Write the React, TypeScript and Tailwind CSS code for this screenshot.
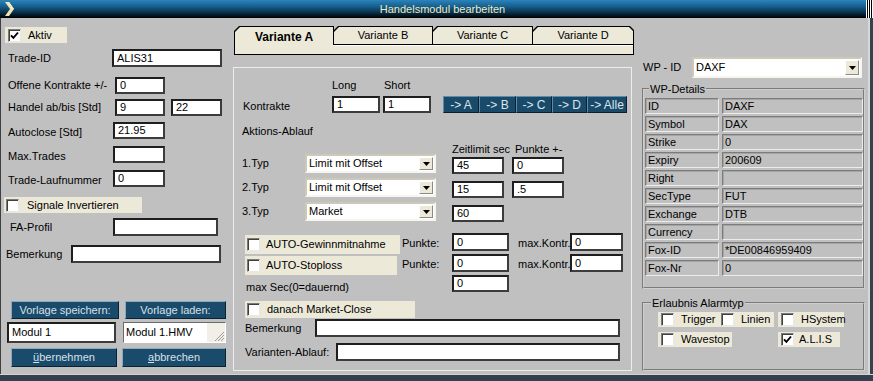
import React from "react";

function Check({ checked = false }: { checked?: boolean }) {
  return (
    <div className="w-[13px] h-[13px] shrink-0 bg-white border border-t-[#7a7a7a] border-l-[#7a7a7a] border-b-[#e8e8e8] border-r-[#e8e8e8] shadow-[inset_1px_1px_0_#404040] flex items-center justify-center">
      {checked && (
        <svg width="9" height="9" viewBox="0 0 9 9">
          <path d="M1 4.3 L3.4 6.9 L8 1.5" stroke="#000" strokeWidth="1.9" fill="none" />
        </svg>
      )}
    </div>
  );
}

function CreamCheck({
  label,
  checked = false,
  cls,
  gap = "ml-[7px]",
}: {
  label: string;
  checked?: boolean;
  cls: string;
  gap?: string;
}) {
  return (
    <div className={`bg-[#ece9d8] flex items-center shrink-0 ${cls}`}>
      <Check checked={checked} />
      <span className={`${gap} whitespace-nowrap`}>{label}</span>
    </div>
  );
}

function TextBox({ cls, value = "" }: { cls: string; value?: string }) {
  return (
    <div
      className={`bg-white border-2 border-t-[#1e1e1e] border-l-[#1e1e1e] border-b-[#3c3c3c] border-r-[#3c3c3c] flex items-center pl-[3px] shrink-0 whitespace-nowrap ${cls}`}
    >
      {value}
    </div>
  );
}

function Select({ cls, value }: { cls: string; value: string }) {
  return (
    <div
      className={`bg-white border-2 border-t-[#cdc9b9] border-l-[#cdc9b9] border-b-[#f7f5ee] border-r-[#f7f5ee] flex items-stretch shrink-0 ${cls}`}
    >
      <div className="flex-1 flex items-center pl-[2px] whitespace-nowrap">{value}</div>
      <div className="w-[14px] my-[1px] mr-[1px] bg-[#ece9d8] border border-t-white border-l-white border-b-[#8a8a8a] border-r-[#8a8a8a] flex items-center justify-center">
        <svg width="7" height="4" viewBox="0 0 7 4">
          <path d="M0 0H7L3.5 4Z" fill="#000" />
        </svg>
      </div>
    </div>
  );
}

function BlueBtn({ cls, children }: { cls: string; children: React.ReactNode }) {
  return (
    <div
      className={`bg-[#1b4b6a] text-[#d6e1ea] border border-t-[#8aa9bf] border-l-[#8aa9bf] border-b-[#0b2232] border-r-[#0b2232] flex items-center justify-center shrink-0 whitespace-nowrap ${cls}`}
    >
      {children}
    </div>
  );
}

function TitleBar() {
  return (
    <div className="h-[18px] flex items-stretch bg-[linear-gradient(180deg,#2a84bd_0%,#17608f_35%,#082f49_70%,#000_100%)]">
      <div className="w-[16px] ml-[3px] flex items-center">
        <svg width="12" height="16" viewBox="0 0 12 16">
          <path d="M2 1 H6 L11 8 L6 15 H2 L7 8 Z" fill="#efe5b0" />
          <path d="M6 1 L11 8 L10 8 L5.5 1.6 Z" fill="#fffbe0" />
        </svg>
      </div>
      <div className="flex-1 flex items-center justify-center text-[#ecebc0] text-[11px]">
        Handelsmodul bearbeiten
      </div>
      <div className="w-[7px] bg-[repeating-linear-gradient(90deg,#ffffff_0px,#ffffff_1px,#000000_1px,#000000_2px)]" />
    </div>
  );
}

function LeftCol() {
  return (
    <div className="w-[230px] flex flex-col">
      <CreamCheck label="Aktiv" checked cls="mt-[9px] ml-[4px] w-[62px] h-[16px] pl-[3px]" />

      <div className="mt-[6px] h-[18px] flex items-center">
        <span className="w-[111px] pl-[7px]">Trade-ID</span>
        <TextBox cls="w-[110px] h-[18px]" value="ALIS31" />
      </div>

      <div className="mt-[10px] h-[17px] flex items-center">
        <span className="w-[114px] pl-[7px] whitespace-nowrap">Offene Kontrakte +/-</span>
        <TextBox cls="w-[50px] h-[17px]" value="0" />
      </div>

      <div className="mt-[5px] h-[17px] flex items-center">
        <span className="w-[114px] pl-[7px] whitespace-nowrap">Handel ab/bis [Std]</span>
        <TextBox cls="w-[50px] h-[17px]" value="9" />
        <TextBox cls="ml-[6px] w-[51px] h-[17px]" value="22" />
      </div>

      <div className="mt-[6px] h-[17px] flex items-center">
        <span className="w-[112px] pl-[7px] mt-[4px]">Autoclose [Std]</span>
        <TextBox cls="w-[52px] h-[17px]" value="21.95" />
      </div>

      <div className="mt-[7px] h-[17px] flex items-center">
        <span className="w-[112px] pl-[7px] mt-[3px]">Max.Trades</span>
        <TextBox cls="w-[52px] h-[17px]" />
      </div>

      <div className="mt-[7px] h-[17px] flex items-center">
        <span className="w-[112px] pl-[7px] mt-[3px]">Trade-Laufnummer</span>
        <TextBox cls="w-[52px] h-[17px]" value="0" />
      </div>

      <CreamCheck
        label="Signale Invertieren"
        cls="mt-[10px] ml-[3px] w-[138px] h-[16px] pl-[2px]"
        gap="ml-[8px]"
      />

      <div className="mt-[5px] h-[18px] flex items-center">
        <span className="w-[112px] pl-[9px]">FA-Profil</span>
        <TextBox cls="w-[105px] h-[18px]" />
      </div>

      <div className="mt-[9px] h-[18px] flex items-center">
        <span className="w-[70px] pl-[5px]">Bemerkung</span>
        <TextBox cls="w-[150px] h-[18px]" />
      </div>

      <div className="mt-[38px] h-[18px] flex">
        <BlueBtn cls="ml-[10px] w-[108px] h-[18px]">Vorlage speichern:</BlueBtn>
        <BlueBtn cls="ml-[6px] w-[101px] h-[18px]">Vorlage laden:</BlueBtn>
      </div>

      <div className="mt-[3px] h-[21px] flex">
        <TextBox cls="ml-[6px] w-[109px] h-[21px]" value="Modul 1" />
        <div className="ml-[7px] w-[103px] h-[21px] bg-white border border-t-[#6a6a6a] border-l-[#6a6a6a] border-b-white border-r-white flex items-stretch">
          <div className="flex-1 flex items-center pl-[2px] whitespace-nowrap">Modul 1.HMV</div>
          <div className="w-[18px] bg-[#f1efe6] flex items-end justify-end">
            <svg width="12" height="12" viewBox="0 0 12 12">
              <path d="M11 2 L2 11 M11 5 L5 11 M11 8 L8 11" stroke="#9c9a92" strokeWidth="1" />
            </svg>
          </div>
        </div>
      </div>

      <div className="mt-[5px] h-[19px] flex">
        <BlueBtn cls="ml-[10px] w-[106px] h-[19px]">
          <span>
            <span className="underline">ü</span>bernehmen
          </span>
        </BlueBtn>
        <BlueBtn cls="ml-[5px] w-[104px] h-[19px]">
          <span>
            <span className="underline">a</span>bbrechen
          </span>
        </BlueBtn>
      </div>
    </div>
  );
}

function Tab({
  label,
  active = false,
  cls,
  clip,
}: {
  label: string;
  active?: boolean;
  cls: string;
  clip: string;
}) {
  return (
    <div className={`relative h-[19px] shrink-0 ${cls}`}>
      <div
        className={`absolute inset-0 bg-black ${clip}`}
      />
      <div
        className={`absolute left-[1px] right-[1px] top-[1px] bg-[#ece9d8] ${active ? "bottom-0" : "bottom-[1px]"} ${clip}`}
      />
      <div
        className={`relative h-full flex items-center justify-center ${active ? "font-bold text-[12px] pt-[3px]" : ""}`}
      >
        {label}
      </div>
    </div>
  );
}

function Tabs() {
  return (
    <div className="mt-[8px] ml-[3px] w-[400px] flex flex-col">
      <div className="flex">
        <Tab
          label="Variante A"
          active
          cls="w-[100px]"
          clip="[clip-path:polygon(5px_0,100%_0,100%_100%,0_100%,0_5px)]"
        />
        <Tab
          label="Variante B"
          cls="w-[100px] -ml-px"
          clip="[clip-path:polygon(5px_0,100%_0,100%_100%,0_100%,0_5px)]"
        />
        <Tab
          label="Variante C"
          cls="w-[101px] -ml-px"
          clip="[clip-path:polygon(5px_0,100%_0,100%_100%,0_100%,0_5px)]"
        />
        <Tab
          label="Variante D"
          cls="w-[102px] -ml-px"
          clip="[clip-path:polygon(5px_0,calc(100%-4px)_0,100%_4px,100%_100%,0_100%,0_5px)]"
        />
      </div>
      <div className="h-[10px] bg-[#ece9d8] border-l border-r border-b border-black">
        <div className="ml-[98px] h-px bg-white" />
      </div>
    </div>
  );
}

function ArrowBtns() {
  const items = [
    { t: "-> A", w: "w-[36px]" },
    { t: "-> B", w: "w-[37px]" },
    { t: "-> C", w: "w-[36px]" },
    { t: "-> D", w: "w-[35px]" },
    { t: "-> Alle", w: "w-[40px]" },
  ];
  return (
    <div className="ml-[12px] flex h-[17px]">
      {items.map((it) => (
        <div
          key={it.t}
          className={`${it.w} h-[17px] bg-[#1a4a69] text-[#dbe5ed] text-[12px] border border-t-[#5f8aa8] border-l-[#5f8aa8] border-b-[#0a2030] border-r-[#0a2030] flex items-center justify-center whitespace-nowrap`}
        >
          {it.t}
        </div>
      ))}
    </div>
  );
}

function Panel() {
  return (
    <div className="mt-[12px] ml-[2px] w-[399px] h-[304px] border border-[#ededed] flex flex-col">
      <div className="mt-[11px] h-[12px] flex items-center">
        <span className="ml-[98px] w-[52px]">Long</span>
        <span>Short</span>
      </div>

      <div className="mt-[5px] h-[17px] flex items-center">
        <span className="ml-[9px] w-[89px] mt-[4px]">Kontrakte</span>
        <TextBox cls="w-[48px] h-[17px]" value="1" />
        <TextBox cls="ml-[3px] w-[48px] h-[17px]" value="1" />
        <ArrowBtns />
      </div>

      <div className="mt-[12px] h-[12px] flex items-center">
        <span className="ml-[8px]">Aktions-Ablauf</span>
      </div>

      <div className="mt-[7px] h-[10px] flex items-start">
        <span className="ml-[218px] w-[63px] whitespace-nowrap">Zeitlimit sec</span>
        <span className="whitespace-nowrap">Punkte +-</span>
      </div>

      <div className="h-[19px] flex items-start">
        <span className="ml-[8px] w-[63px] self-center">1.Typ</span>
        <Select cls="w-[131px] h-[19px]" value="Limit mit Offset" />
        <TextBox cls="ml-[16px] mt-[3px] w-[52px] h-[17px]" value="45" />
        <TextBox cls="ml-[8px] mt-[3px] w-[52px] h-[17px]" value="0" />
      </div>

      <div className="mt-[5px] h-[19px] flex items-start">
        <span className="ml-[8px] w-[63px] self-center">2.Typ</span>
        <Select cls="w-[131px] h-[19px]" value="Limit mit Offset" />
        <TextBox cls="ml-[16px] mt-[3px] w-[52px] h-[17px]" value="15" />
        <TextBox cls="ml-[8px] mt-[3px] w-[52px] h-[17px]" value=".5" />
      </div>

      <div className="mt-[5px] h-[19px] flex items-start">
        <span className="ml-[8px] w-[63px] self-center">3.Typ</span>
        <Select cls="w-[131px] h-[19px]" value="Market" />
        <TextBox cls="ml-[16px] mt-[3px] w-[52px] h-[17px]" value="60" />
      </div>

      <div className="mt-[12px] h-[21px] flex items-start">
        <CreamCheck
          label="AUTO-Gewinnmitnahme"
          cls="ml-[11px] mt-[2px] w-[155px] h-[19px] pl-[2px]"
          gap="ml-[6px]"
        />
        <span className="ml-[2px] w-[50px] mt-[5px]">Punkte:</span>
        <TextBox cls="w-[57px] h-[18px]" value="0" />
        <span className="ml-[9px] w-[52px] mt-[5px] whitespace-nowrap">max.Kontr.</span>
        <TextBox cls="w-[53px] h-[18px]" value="0" />
      </div>

      <div className="h-[21px] flex items-start">
        <CreamCheck
          label="AUTO-Stoploss"
          cls="ml-[11px] mt-[2px] w-[152px] h-[19px] pl-[2px]"
          gap="ml-[6px]"
        />
        <span className="ml-[5px] w-[50px] mt-[5px]">Punkte:</span>
        <TextBox cls="w-[57px] h-[18px]" value="0" />
        <span className="ml-[9px] w-[52px] mt-[5px] whitespace-nowrap">max.Kontr.</span>
        <TextBox cls="w-[53px] h-[18px]" value="0" />
      </div>

      <div className="h-[17px] flex items-start">
        <span className="ml-[12px] w-[206px] mt-[7px] whitespace-nowrap">max Sec(0=dauernd)</span>
        <TextBox cls="w-[57px] h-[17px]" value="0" />
      </div>

      <CreamCheck
        label="danach Market-Close"
        cls="mt-[9px] ml-[11px] w-[170px] h-[17px] pl-[2px]"
        gap="ml-[7px]"
      />

      <div className="mt-[1px] h-[18px] flex items-center">
        <span className="ml-[11px] w-[70px]">Bemerkung</span>
        <TextBox cls="w-[305px] h-[18px]" />
      </div>

      <div className="mt-[6px] h-[18px] flex items-center">
        <span className="ml-[11px] w-[91px] whitespace-nowrap">Varianten-Ablauf:</span>
        <TextBox cls="w-[284px] h-[18px]" />
      </div>
    </div>
  );
}

function MidCol() {
  return (
    <div className="w-[405px] flex flex-col">
      <Tabs />
      <Panel />
    </div>
  );
}

const details: [string, string][] = [
  ["ID", "DAXF"],
  ["Symbol", "DAX"],
  ["Strike", "0"],
  ["Expiry", "200609"],
  ["Right", ""],
  ["SecType", "FUT"],
  ["Exchange", "DTB"],
  ["Currency", ""],
  ["Fox-ID", "*DE00846959409"],
  ["Fox-Nr", "0"],
];

function Cell({ cls, text }: { cls: string; text: string }) {
  return (
    <div
      className={`h-[16px] border border-t-[#7c7c7c] border-l-[#7c7c7c] border-b-[#ececec] border-r-[#ececec] shadow-[inset_1px_1px_0_#a4a4a4] flex items-center pl-[2px] whitespace-nowrap ${cls}`}
    >
      {text}
    </div>
  );
}

function RightCol() {
  return (
    <div className="w-[232px] flex flex-col">
      <div className="mt-[39px] h-[21px] flex items-center">
        <span className="ml-[7px] w-[49px] whitespace-nowrap">WP - ID</span>
        <Select cls="w-[170px] h-[21px]" value="DAXF" />
      </div>

      <fieldset className="mt-[5px] ml-[6px] w-[223px] h-[206px] border-2 border-[#cfcfcf] [border-style:groove] pt-[3px]">
        <legend className="ml-[5px] px-[1px] leading-[12px]">WP-Details</legend>
        <div className="flex flex-col gap-[2px] pl-[1px]">
          {details.map(([k, v]) => (
            <div key={k} className="flex">
              <Cell cls="w-[74px]" text={k} />
              <Cell cls="ml-[3px] w-[141px]" text={v} />
            </div>
          ))}
        </div>
      </fieldset>

      <fieldset className="mt-[8px] ml-[6px] w-[223px] h-[74px] border-2 border-[#cfcfcf] [border-style:groove] pt-[3px]">
        <legend className="ml-[7px] px-[1px] leading-[12px]">Erlaubnis Alarmtyp</legend>
        <div className="flex ml-[14px] h-[15px]">
          <CreamCheck label="Trigger" cls="w-[61px] h-[15px] pl-[3px]" gap="ml-[7px]" />
          <CreamCheck label="Linien" cls="w-[55px] h-[15px] pl-[2px]" gap="ml-[7px]" />
          <CreamCheck label="HSystem" cls="ml-[4px] w-[66px] h-[15px] pl-[3px]" gap="ml-[7px]" />
        </div>
        <div className="flex ml-[14px] mt-[5px] h-[15px]">
          <CreamCheck label="Wavestop" cls="w-[74px] h-[15px] pl-[3px]" gap="ml-[7px]" />
          <CreamCheck label="A.L.I.S" checked cls="ml-[46px] w-[62px] h-[15px] pl-[3px]" gap="ml-[5px]" />
        </div>
      </fieldset>
    </div>
  );
}

export default function App() {
  return (
    <div className="w-[873px] h-[381px] bg-[#c0c0c0] flex flex-col overflow-hidden text-black text-[11px] leading-none font-['Liberation_Sans',Arial,sans-serif]">
      <TitleBar />
      <div className="flex h-[356px]">
        <div className="w-px bg-[#3e3e3e]" />
        <LeftCol />
        <MidCol />
        <RightCol />
        <div className="w-[2px] bg-[#d8d8d8]" />
        <div className="w-[3px] bg-[#36434f]" />
      </div>
      <div className="h-[7px] border-t border-[#d4d4d4] bg-[#33414e]" />
    </div>
  );
}
